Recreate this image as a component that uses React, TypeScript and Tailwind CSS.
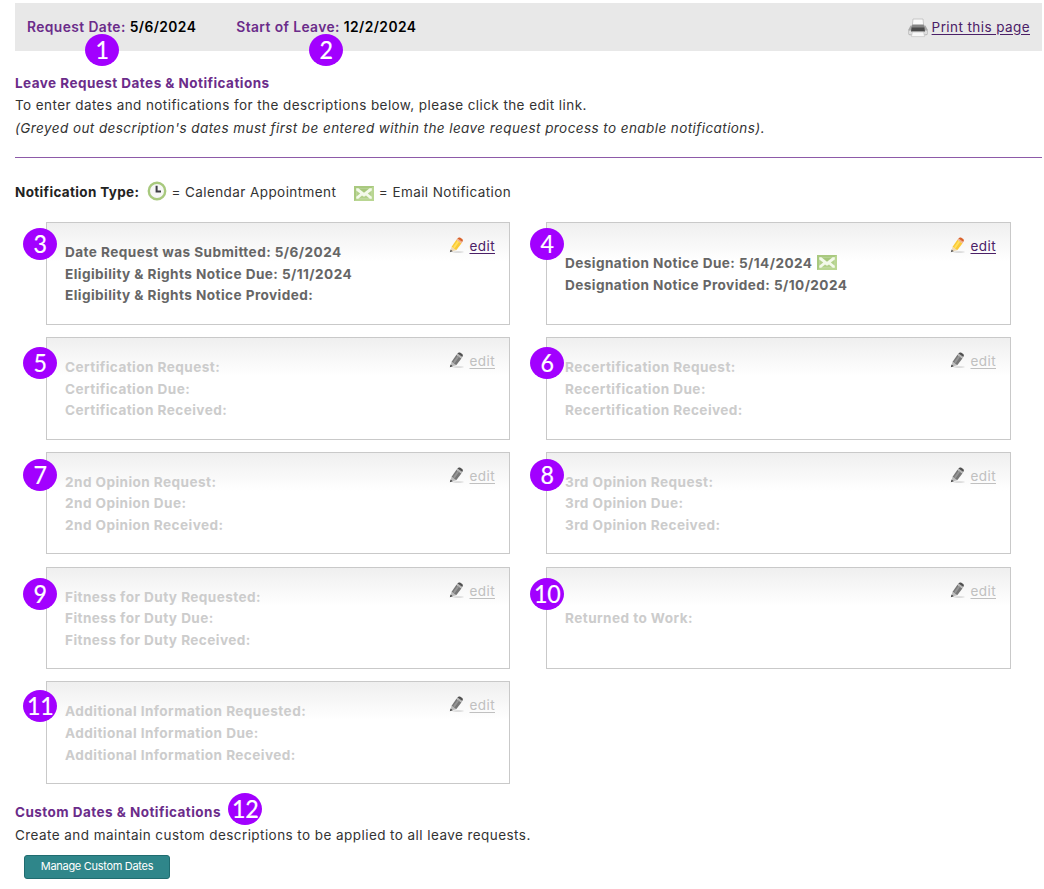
import clsx from "clsx";

type NoticeLine = {
  text: string;
  email?: boolean;
};

type NoticeCard = {
  step: number;
  lines: NoticeLine[];
  enabled?: boolean;
  // badges are not perfectly aligned to their cards
  badgeTop: string;
  bodyTop?: string;
};

const cards: NoticeCard[] = [
  {
    step: 3,
    enabled: true,
    badgeTop: "top-[5px]",
    lines: [
      { text: "Date Request was Submitted: 5/6/2024" },
      { text: "Eligibility & Rights Notice Due: 5/11/2024" },
      { text: "Eligibility & Rights Notice Provided:" },
    ],
  },
  {
    step: 4,
    enabled: true,
    badgeTop: "top-[5px]",
    bodyTop: "pt-[29.8px]",
    lines: [
      { text: "Designation Notice Due: 5/14/2024", email: true },
      { text: "Designation Notice Provided: 5/10/2024" },
    ],
  },
  {
    step: 5,
    badgeTop: "top-[9px]",
    lines: [
      { text: "Certification Request:" },
      { text: "Certification Due:" },
      { text: "Certification Received:" },
    ],
  },
  {
    step: 6,
    badgeTop: "top-[9px]",
    lines: [
      { text: "Recertification Request:" },
      { text: "Recertification Due:" },
      { text: "Recertification Received:" },
    ],
  },
  {
    step: 7,
    badgeTop: "top-[6px]",
    lines: [
      { text: "2nd Opinion Request:" },
      { text: "2nd Opinion Due:" },
      { text: "2nd Opinion Received:" },
    ],
  },
  {
    step: 8,
    badgeTop: "top-[6px]",
    lines: [
      { text: "3rd Opinion Request:" },
      { text: "3rd Opinion Due:" },
      { text: "3rd Opinion Received:" },
    ],
  },
  {
    step: 9,
    badgeTop: "top-[10px]",
    lines: [
      { text: "Fitness for Duty Requested:" },
      { text: "Fitness for Duty Due:" },
      { text: "Fitness for Duty Received:" },
    ],
  },
  {
    step: 10,
    badgeTop: "top-[10px]",
    bodyTop: "pt-[40.6px]",
    lines: [{ text: "Returned to Work:" }],
  },
  {
    step: 11,
    badgeTop: "top-[8px]",
    lines: [
      { text: "Additional Information Requested:" },
      { text: "Additional Information Due:" },
      { text: "Additional Information Received:" },
    ],
  },
];

function Badge({ n, className }: { n: number; className: string }) {
  return (
    <span
      className={clsx(
        "absolute flex h-8 w-[34px] items-center justify-center rounded-[50%] bg-[#a200ff] font-[Lato,sans-serif] text-[25px] leading-8 font-normal tracking-[-0.3px] text-white",
        className,
      )}
    >
      <span className="-mt-0.5 scale-x-[0.93] [-webkit-text-stroke:0.2px_white]">{n}</span>
    </span>
  );
}

function PencilIcon({ enabled }: { enabled?: boolean }) {
  const c = enabled
    ? { body: "#fbc935", light: "#ffe05e", end: "#d9622b", band: "#f0b08c", wood: "#efd9b4", tip: "#5c5c5c" }
    : { body: "#777777", light: "#959595", end: "#505050", band: "#b5b5b5", wood: "#bdbdbd", tip: "#4a4a4a" };
  return (
    <svg viewBox="0 0 16 16" className="h-4 w-4" aria-hidden="true">
      <ellipse cx="9" cy="15" rx="5.8" ry="0.8" fill="#d4d4d4" />
      <path d="M1 15 2.6 9.8 7.2 13.2Z" fill={c.wood} />
      <path d="M.8 15.3 1.6 12.6 3.8 14.3Z" fill={c.tip} />
      <path d="M2.6 9.8 7.4 2.8 12.4 6.4 7.2 13.2Z" fill={c.body} />
      <path d="M4 10.2 8.6 3.7 10.2 4.8 5.5 11.4Z" fill={c.light} />
      <path d="M7.4 2.8 8.4 1.5 13.3 5.1 12.4 6.4Z" fill={c.band} />
      <path d="M8.4 1.5Q9.4 0 11 .5L13.3 2Q14.6 3.2 13.3 5.1Z" fill={c.end} />
    </svg>
  );
}

function MailIcon({ className }: { className?: string }) {
  return (
    <svg viewBox="0 0 20 15" className={clsx("h-[15px] w-5", className)} aria-hidden="true">
      <rect width="20" height="15" fill="#a9c97f" />
      <path d="M0 15 20 0V15Z" fill="#b9d692" />
      <rect x="2.2" y="2.2" width="15.6" height="10.6" fill="#f3f9ea" />
      <path d="M4.4 2.2h11.2L10 6.8Z" fill="#a6c77c" />
      <path d="M2.2 4.4 6.2 7.6 2.2 10.8Z" fill="#b2d08a" />
      <path d="M17.8 4.4 13.8 7.6 17.8 10.8Z" fill="#b2d08a" />
      <path d="M4.2 12.8 8 9.4 10 10.8 12 9.4 15.8 12.8Z" fill="#b2d08a" />
    </svg>
  );
}

function ClockIcon() {
  return (
    <svg viewBox="0 0 20 20" className="h-5 w-5" aria-hidden="true">
      <circle cx="10" cy="10" r="8.2" fill="#f7f7f7" stroke="#a8c97e" strokeWidth="2.4" />
      <path d="M9.6 4.8V10.4H14" fill="none" stroke="#3d3d45" strokeWidth="2" />
    </svg>
  );
}

function PrinterIcon() {
  return (
    <svg viewBox="0 0 20 20" className="h-5 w-5" aria-hidden="true">
      <path d="M5 1h10l.8 8H4.2Z" fill="#fafafa" stroke="#bdbdbd" strokeWidth=".8" />
      <path d="M2.6 7.4h14.8l2.2 4v4.4q0 1.4-1.4 1.4H1.8q-1.4 0-1.4-1.4v-4.4Z" fill="#a8a8a8" />
      <rect x=".8" y="12.6" width="18.4" height="3.8" rx="1.2" fill="#dedede" />
      <path d="M4.4 6.4h11.2l1 3.6H3.4Z" fill="#858585" />
      <path d="M3.6 9.6h12.8l.6 4H3Z" fill="#4a4a4a" />
      <path d="M4.4 14h11.2l1 4.6H3.4Z" fill="#f8f8f8" stroke="#c4c4c4" strokeWidth=".7" />
    </svg>
  );
}

function Card({ step, lines, enabled, badgeTop, bodyTop }: NoticeCard) {
  return (
    <div
      className={clsx(
        "relative flex h-[102.6px] justify-between border border-[#c9c9c9] bg-linear-to-b from-[#efefef] to-white to-[38px] pl-[18px] pr-[14px]",
        enabled ? "text-[#666666]" : "text-[#cccccc]",
      )}
    >
      <Badge n={step} className={clsx(step % 2 ? "-left-6" : "-left-[17px]", badgeTop)} />
      <div
        className={clsx("text-[13.6px] font-bold tracking-[0.43px]", bodyTop ?? "pt-[19.1px]")}
      >
        {lines.map((line) => (
          <p key={line.text} className="flex h-[21.6px] items-center gap-[5px]">
            {line.text}
            {line.email && <MailIcon className="-mt-[3px]" />}
          </p>
        ))}
      </div>
      <div className="flex h-12 items-center gap-1">
        <span className="-mt-1">
          <PencilIcon enabled={enabled} />
        </span>
        <a
          href="#"
          className={clsx(
            "underline underline-offset-2",
            enabled ? "text-[#4b2067]" : "text-[#c0c0c0]",
          )}
        >
          edit
        </a>
      </div>
    </div>
  );
}

export default function App() {
  return (
    <main className="h-[889px] w-[1044px] overflow-hidden bg-white pt-[3px] pr-0.5 pl-[15px] font-[Inter,sans-serif] text-[13.5px] leading-[21.6px] tracking-[0.42px] text-[#333333]">
      <header className="flex h-12 items-center justify-between bg-[#e8e8e8] pt-px pr-3 pl-3">
        <div className="flex gap-10 text-[13.8px] font-semibold text-black">
          <p className="relative">
            <span className="text-[#6b2c8a]">Request Date:</span> 5/6/2024
            <Badge n={1} className="top-[17px] left-[58px]" />
          </p>
          <p className="relative">
            <span className="text-[#6b2c8a]">Start of Leave:</span> 12/2/2024
            <Badge n={2} className="top-[17px] left-[72.5px]" />
          </p>
        </div>
        <a href="#" className="flex items-center gap-1 text-[#4b2067] underline underline-offset-2">
          <PrinterIcon />
          Print this page
        </a>
      </header>

      <section className="mt-[22px] border-b border-[#8d5aa8] pb-[17.4px]">
        <h2 className="font-bold tracking-[0.46px] text-[#6b2c8a]">
          Leave Request Dates &amp; Notifications
        </h2>
        <p>
          To enter dates and notifications for the descriptions below, please click the edit link.
        </p>
        <p className="mt-[1.6px] italic">
          (Greyed out description&apos;s dates must first be entered within the leave request process
          to enable notifications).
        </p>
      </section>

      <div className="mt-6 flex h-[22px] items-center">
        <span className="font-bold tracking-[0.35px] text-[#222222]">Notification Type:</span>
        <span className="-mt-1 ml-2">
          <ClockIcon />
        </span>
        <span className="ml-1">= Calendar Appointment</span>
        <MailIcon className="mt-[2px] ml-[17.5px]" />
        <span className="ml-[5px]">= Email Notification</span>
      </div>

      <div className="mt-[18.4px] ml-[31px] grid grid-cols-[464px_465px] gap-x-9 gap-y-[12.2px]">
        {cards.map((card) => (
          <Card key={card.step} {...card} />
        ))}
      </div>

      <section className="mt-[18.6px]">
        <h2 className="relative w-fit font-bold tracking-[0.46px] text-[#6b2c8a]">
          Custom Dates &amp; Notifications
          <Badge n={12} className="-top-[9.6px] -right-[41px]" />
        </h2>
        <p className="mt-px tracking-[0.435px]">
          Create and maintain custom descriptions to be applied to all leave requests.
        </p>
        <button className="mt-2 ml-[9px] flex h-6 w-[146px] items-center justify-center rounded-[3px] border border-[#206c70] bg-[#2f868a] text-[11px] tracking-[-0.3px] text-white">
          Manage Custom Dates
        </button>
      </section>
    </main>
  );
}
